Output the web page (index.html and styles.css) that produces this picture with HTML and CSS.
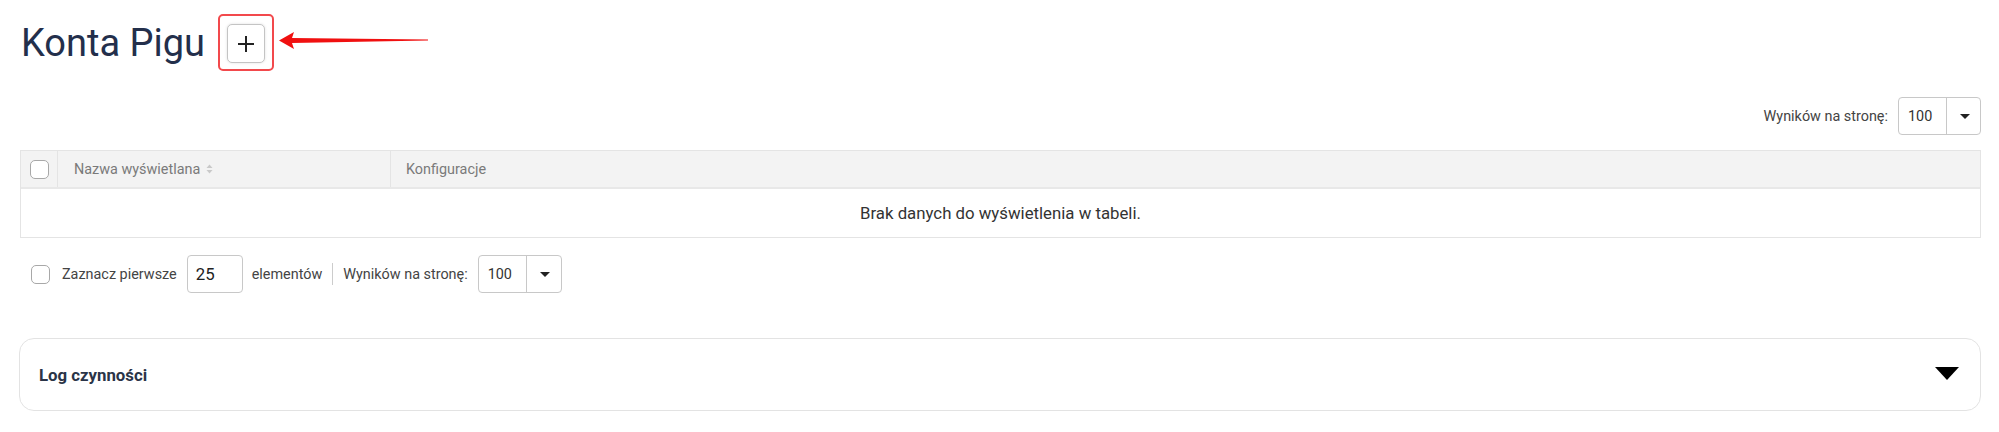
FILE: index.html
```html
<!DOCTYPE html>
<html lang="pl">
<head>
<meta charset="utf-8">
<title>Konta Pigu</title>
<link rel="stylesheet" href="styles.css">
</head>
<body>
<div class="page">
  <div class="head">
    <h1 class="title">Konta Pigu</h1>
    <div class="highlight">
      <button class="add-btn" type="button" aria-label="Dodaj">
        <svg width="20" height="20" viewBox="0 0 20 20"><path d="M10 2v16M2 10h16" stroke="#222" stroke-width="2" fill="none"/></svg>
      </button>
    </div>
    <svg class="arrow" width="150" height="20" viewBox="0 0 150 20">
      <polygon points="0,9.5 15,1 13,7 149,8.6 149,9.6 13,12 15,18" fill="#f01010"/>
    </svg>
  </div>

  <div class="toolbar">
    <span class="lbl">Wyników na stronę:</span>
    <div class="select">
      <span class="val">100</span>
      <span class="caret-box"><span class="caret"></span></span>
    </div>
  </div>

  <div class="table">
    <div class="thead">
      <div class="c-check"><span class="cb"></span></div>
      <div class="c-name">Nazwa wyświetlana <span class="sort"><svg width="7" height="10" viewBox="0 0 7 10"><path d="M3.5 0.5L6.5 4H0.5z M3.5 9.5L6.5 6H0.5z" fill="#c9c9c9"/></svg></span></div>
      <div class="c-conf">Konfiguracje</div>
    </div>
    <div class="empty">Brak danych do wyświetlenia w tabeli.</div>
  </div>

  <div class="bottom">
    <span class="cb cb-small"></span>
    <span class="lbl2">Zaznacz pierwsze</span>
    <span class="num">25</span>
    <span class="lbl2">elementów</span>
    <span class="sep"></span>
    <span class="lbl2">Wyników na stronę:</span>
    <div class="select select-small">
      <span class="val">100</span>
      <span class="caret-box"><span class="caret"></span></span>
    </div>
  </div>

  <div class="log">
    <span class="log-title">Log czynności</span>
    <span class="log-tri"></span>
  </div>
</div>
</body>
</html>
```

FILE: styles.css
```css
* { box-sizing: border-box; }
html, body { margin: 0; padding: 0; background: #fff; }
body { font-family: Roboto, "Liberation Sans", sans-serif; color: #333; }

.page { padding: 14px 18px 0 20px; }

.head { display: flex; align-items: center; height: 57px; }
.title {
  margin: 0 13px 0 1px;
  font-size: 38px;
  font-weight: 400;
  color: #232f4b;
  line-height: 1;
}
.highlight {
  border: 2px solid #f2494c;
  border-radius: 5px;
  padding: 8px 7px 6px 7px;
  height: 57px;
  width: 56px;
}
.add-btn {
  display: flex; align-items: center; justify-content: center;
  width: 38px; height: 39px;
  padding: 0;
  background: #fff;
  border: 1px solid #c4c4c4;
  border-radius: 5px;
  box-shadow: 0 0 3px rgba(0,0,0,0.12);
}
.arrow { margin-left: 5px; margin-top: -4px; }

.toolbar {
  margin-top: 26px;
  display: flex; justify-content: flex-end; align-items: center;
  gap: 10px;
}
.lbl { font-size: 14.4px; color: #444; }
.select {
  display: flex; height: 38px; width: 83px;
  border: 1px solid #c8c8c8; border-radius: 4px;
  font-size: 14.4px; color: #333;
}
.select .val { width: 48px; display: flex; align-items: center; padding-left: 9px; border-right: 1px solid #c8c8c8; }
.select .caret-box { flex: 1; display: flex; align-items: center; justify-content: center; padding-left: 2px; }
.caret { width: 0; height: 0; border-left: 5px solid transparent; border-right: 5px solid transparent; border-top: 5px solid #222; }

.table {
  margin-top: 15px;
  border: 1px solid #e4e4e4;
}
.thead {
  display: flex; height: 38px;
  background: #f3f3f3;
  border-bottom: 2px solid #e8e8e8;
  font-size: 14.4px; color: #7a7a7a;
}
.c-check { width: 37px; display: flex; align-items: center; justify-content: center; border-right: 1px solid #e4e4e4; padding-left: 1px; }
.c-name { width: 333px; display: flex; align-items: center; padding-left: 16px; border-right: 1px solid #e4e4e4; }
.c-conf { flex: 1; display: flex; align-items: center; padding-left: 15px; }
.sort { margin-left: 6px; display: inline-flex; }
.cb {
  display: inline-block; width: 19px; height: 19px;
  border: 1px solid #a8a8a8; border-radius: 5px; background: #fff;
}
.empty {
  height: 48px; display: flex; align-items: center; justify-content: center;
  font-size: 16.8px; color: #333;
}

.bottom {
  margin-top: 17px;
  display: flex; align-items: center; height: 38px;
  padding-left: 11px;
}
.cb-small { width: 19px; height: 19px; margin-right: 12px; }
.lbl2 { font-size: 14.4px; color: #444; }
.num {
  margin: 0 9px 0 10px; width: 56px; height: 38px;
  border: 1px solid #c8c8c8; border-radius: 4px;
  display: flex; align-items: center; padding-left: 8px;
  font-size: 16.8px; color: #222;
}
.sep { width: 1px; height: 22px; background: #ccc; margin: 0 10px; }
.select-small { width: 84px; margin-left: 10px; }
.select-small .val { width: 48px; padding-left: 9px; }

.log {
  margin-top: 45px; margin-left: -1px;
  height: 73px;
  border: 1px solid #e3e3e3; border-radius: 15px;
  display: flex; align-items: center; justify-content: space-between;
  padding: 0 21px 0 19px;
}
.log-title { font-size: 16.8px; font-weight: 700; color: #2a3447; }
.log-tri { width: 0; height: 0; border-left: 12.5px solid transparent; border-right: 12.5px solid transparent; border-top: 13px solid #000; margin-top: -2px; }
```
